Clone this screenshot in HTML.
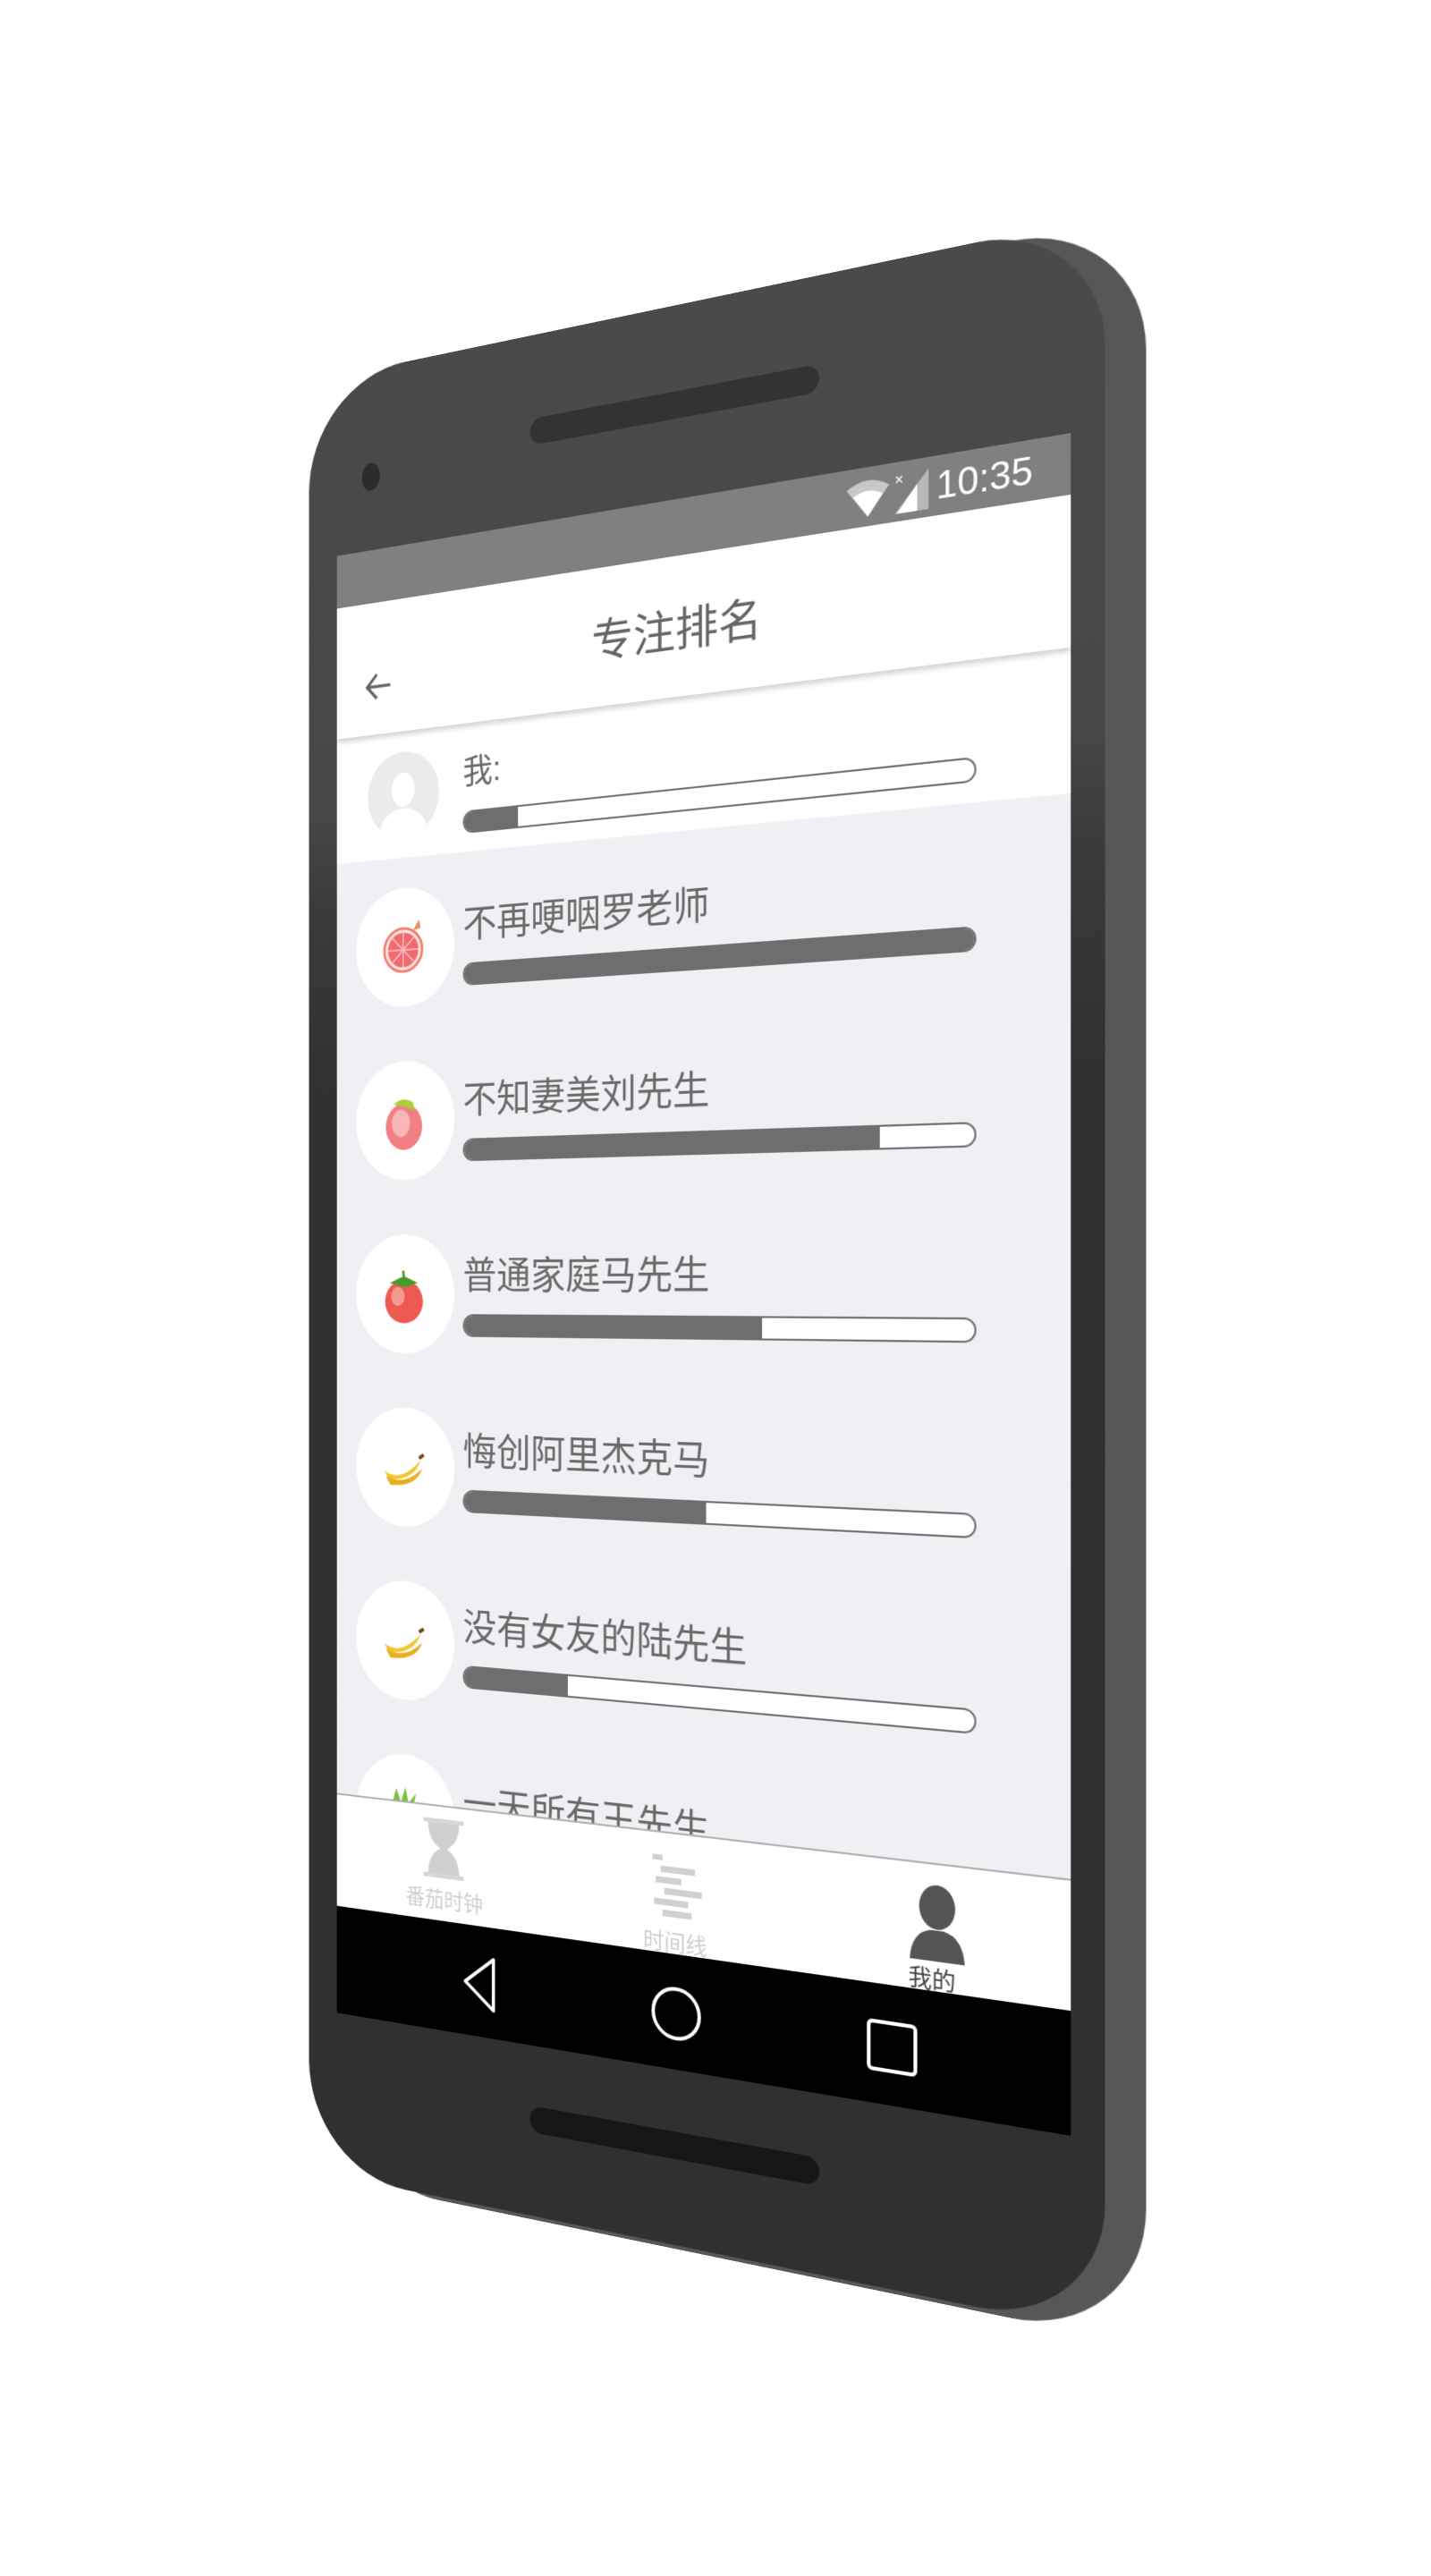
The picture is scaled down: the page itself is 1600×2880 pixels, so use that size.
<!DOCTYPE html>
<html><head><meta charset="utf-8">
<style>
html,body{margin:0;padding:0;background:#fff;width:1600px;height:2880px;overflow:hidden}
#wrap{position:absolute;left:311px;top:549px;width:856px;height:1716px;perspective:2000px;transform:translate(16px,29px) scale(1.023);transform-origin:50% 50%}
#plane{position:absolute;left:0;top:0;width:856px;height:1716px;transform:rotateY(-21.35deg);transform-origin:50% 50%}
.abs{position:absolute}
#side{left:2px;top:-206px;width:928px;height:2118px;border-radius:135px;background:#575757}
#front{left:-38px;top:-212px;width:928px;height:2120px;border-radius:130px;background:linear-gradient(180deg,#4a4a4a 0%,#474747 24%,#3a3a3a 30%,#313131 40%,#303030 100%)}
#screen{left:0;top:0;width:856px;height:1716px;overflow:hidden;background:#efeff4;font-family:"Liberation Sans","Noto Sans CJK SC",sans-serif}
.status{left:0;top:0;width:856px;height:62px;background:#808080}
.header{left:0;top:62px;width:856px;height:154px;background:#fff;box-shadow:0 4px 6px rgba(0,0,0,0.18);z-index:3}
.me{left:0;top:216px;width:856px;height:147px;background:#fff;z-index:2}
.bar{position:absolute;left:167px;width:589px;height:22px;border:2px solid #6e6e6e;border-radius:13px;background:#fff;overflow:hidden}
.bar i{display:block;height:100%;background:#6e6e6e}
.row{position:absolute;left:0;width:856px;height:201px}
.circ{position:absolute;left:26px;top:35px;width:130px;height:138px;border-radius:50%;background:#fff}
.name{position:absolute;left:167px;top:60px;font-size:43px;line-height:48px;color:#6a6a6a;white-space:nowrap}
.tabs{left:0;top:1457px;width:856px;height:133px;background:#fff;border-top:2px solid #b0b0b0;z-index:4}
.nav{left:0;top:1590px;width:856px;height:126px;background:#000;z-index:4}
.tl{position:absolute;font-size:25px;color:#cfcfcf;width:285px;text-align:center;top:92px}
</style></head><body>
<div id="wrap"><div id="plane">
  <div class="abs" id="side"></div>
  <div class="abs" id="front">
    <div class="abs" style="left:72px;top:110px;width:24px;height:32px;border-radius:50%;background:#2c2c2c"></div>
    <div class="abs" style="left:290px;top:94px;width:340px;height:30px;border-radius:15px;background:#333"></div>
    <div class="abs" style="left:290px;top:1996px;width:340px;height:30px;border-radius:15px;background:#161616"></div>
  </div>
  <div class="abs" id="screen">
    <div class="abs status">
      <svg class="abs" style="left:620px;top:12px" width="50" height="42" viewBox="0 0 50 42"><path d="M2 10 Q25 -6 48 10 L25 40 Z" fill="#c8c8c8"/><path d="M9 18 Q25 8 41 18 L25 40 Z" fill="#fff"/></svg>
      <svg class="abs" style="left:672px;top:8px" width="40" height="48" viewBox="0 0 40 48"><path d="M38 4 L38 46 L2 46 Z" fill="#b8b8b8"/><path d="M26 18 L26 46 L4 46 Z" fill="#fff"/><text x="2" y="16" font-size="16" fill="#fff" font-family="Liberation Sans">×</text></svg>
      <div class="abs" style="left:718px;top:10px;font-size:40px;color:#fff;line-height:44px">10:35</div>
    </div>
    <div class="abs header">
      <div class="abs" style="left:0;width:856px;top:52px;text-align:center;font-size:50px;color:#666;line-height:60px">专注排名</div>
      <svg class="abs" style="left:36px;top:78px" width="40" height="40" viewBox="0 0 40 40"><path d="M36 20 H6 M18 6 L5 20 L18 34" stroke="#666" stroke-width="3.5" fill="none"/></svg>
    </div>
    <div class="abs me">
      <div class="abs" style="left:42px;top:24px;width:94px;height:100px;border-radius:50%;background:#ebebeb;overflow:hidden">
        <svg width="94" height="100" viewBox="0 0 94 100"><ellipse cx="47" cy="44" rx="15" ry="20" fill="#fff"/><path d="M14 100 Q16 72 40 66 L54 66 Q78 72 80 100 Z" fill="#fff"/></svg>
      </div>
      <div class="abs" style="left:167px;top:36px;font-size:38px;color:#6a6a6a;line-height:42px">我:</div>
      <div class="bar" style="top:100px"><i style="width:11.5%"></i></div>
    </div>
    <div class="abs" style="left:0;top:363px;width:856px;height:1100px">
      <div class="row" style="top:0">
        <div class="circ"><svg width="130" height="138" viewBox="0 0 130 138"><circle cx="63" cy="72" r="25" fill="#fbe0da" stroke="#f08070" stroke-width="3"/><circle cx="63" cy="72" r="20" fill="#f06a6f"/><path d="M63 52V92M43 72H83M49 58L77 86M77 58L49 86" stroke="#f9b4b4" stroke-width="2"/><path d="M76 50 L84 38 L86 48 Z" fill="#f28a5a"/></svg></div>
        <div class="name">不再哽咽罗老师</div>
        <div class="bar" style="top:127px"><i style="width:100%"></i></div>
      </div>
      <div class="row" style="top:201px">
        <div class="circ"><svg width="130" height="138" viewBox="0 0 130 138"><ellipse cx="64" cy="76" rx="24" ry="27" fill="#f27f84"/><ellipse cx="60" cy="72" rx="12" ry="16" fill="#f9b6b6"/><path d="M50 50 Q62 40 76 48 L78 58 Q66 52 50 50Z" fill="#a6cf3a"/></svg></div>
        <div class="name">不知妻美刘先生</div>
        <div class="bar" style="top:127px"><i style="width:83%"></i></div>
      </div>
      <div class="row" style="top:402px">
        <div class="circ"><svg width="130" height="138" viewBox="0 0 130 138"><ellipse cx="64" cy="78" rx="25" ry="25" fill="#ee5a52"/><ellipse cx="56" cy="72" rx="9" ry="11" fill="#f59a90"/><path d="M50 56 L64 50 L78 56 L66 60 Z M63 42 L65 56" fill="#4c9a2a" stroke="#4c9a2a" stroke-width="3"/></svg></div>
        <div class="name">普通家庭马先生</div>
        <div class="bar" style="top:127px"><i style="width:61%"></i></div>
      </div>
      <div class="row" style="top:603px">
        <div class="circ"><svg width="130" height="138" viewBox="0 0 130 138"><path d="M38 74 Q60 88 86 60 Q78 84 44 84 Z" fill="#f3c534"/><path d="M40 80 Q64 92 88 70 Q80 92 46 90 Z" fill="#e8b020"/><path d="M84 58 L90 54" stroke="#6b4a1a" stroke-width="4"/></svg></div>
        <div class="name">悔创阿里杰克马</div>
        <div class="bar" style="top:127px"><i style="width:50%"></i></div>
      </div>
      <div class="row" style="top:804px">
        <div class="circ"><svg width="130" height="138" viewBox="0 0 130 138"><path d="M38 74 Q60 88 86 60 Q78 84 44 84 Z" fill="#f3c534"/><path d="M40 80 Q64 92 88 70 Q80 92 46 90 Z" fill="#e8b020"/><path d="M84 58 L90 54" stroke="#6b4a1a" stroke-width="4"/></svg></div>
        <div class="name">没有女友的陆先生</div>
        <div class="bar" style="top:127px"><i style="width:22%"></i></div>
      </div>
      <div class="row" style="top:1005px">
        <div class="circ"><svg width="130" height="138" viewBox="0 0 130 138"><path d="M48 60 L54 40 L60 56 L66 38 L70 56 L80 44 L76 62 Z" fill="#7cc23a"/><ellipse cx="64" cy="76" rx="20" ry="16" fill="#c0392b"/></svg></div>
        <div class="name">一天所有王先生</div>
      </div>
    </div>
    <div class="abs tabs">
      <svg class="abs" style="left:112px;top:12px" width="60" height="72" viewBox="0 0 60 72"><rect x="4" y="2" width="52" height="5" fill="#d6d6d6"/><rect x="4" y="65" width="52" height="5" fill="#d6d6d6"/><path d="M10 7 H50 Q50 28 34 36 Q50 44 50 65 H10 Q10 44 26 36 Q10 28 10 7Z" fill="#d0d0d0"/></svg>
      <div class="tl" style="left:0;top:88px">番茄时钟</div>
      <svg class="abs" style="left:395px;top:22px" width="70" height="72" viewBox="0 0 70 72"><g fill="#d0d0d0"><rect x="6" y="2" width="12" height="6"/><rect x="16" y="14" width="40" height="7"/><rect x="10" y="26" width="30" height="7"/><rect x="20" y="38" width="44" height="7"/><rect x="8" y="50" width="40" height="7"/><rect x="18" y="62" width="34" height="7"/></g></svg>
      <div class="tl" style="left:285px;top:100px">时间线</div>
      <svg class="abs" style="left:686px;top:20px" width="66" height="80" viewBox="0 0 66 80"><ellipse cx="33" cy="24" rx="19" ry="23" fill="#555"/><path d="M4 80 Q6 52 26 48 L40 48 Q60 52 62 80 Z" fill="#555"/></svg>
      <div class="tl" style="left:571px;top:100px;color:#444">我的</div>
    </div>
    <div class="abs nav">
      <svg class="abs" style="left:160px;top:30px" width="60" height="70" viewBox="0 0 60 70"><path d="M46 6 L10 35 L46 64 Z" fill="none" stroke="#fff" stroke-width="4" stroke-linejoin="round"/></svg>
      <svg class="abs" style="left:394px;top:30px" width="70" height="70" viewBox="0 0 70 70"><circle cx="35" cy="35" r="27" fill="none" stroke="#fff" stroke-width="4"/></svg>
      <svg class="abs" style="left:636px;top:30px" width="70" height="70" viewBox="0 0 70 70"><rect x="10" y="10" width="50" height="50" rx="4" fill="none" stroke="#fff" stroke-width="4"/></svg>
    </div>
  </div>
</div></div>
</body></html>
